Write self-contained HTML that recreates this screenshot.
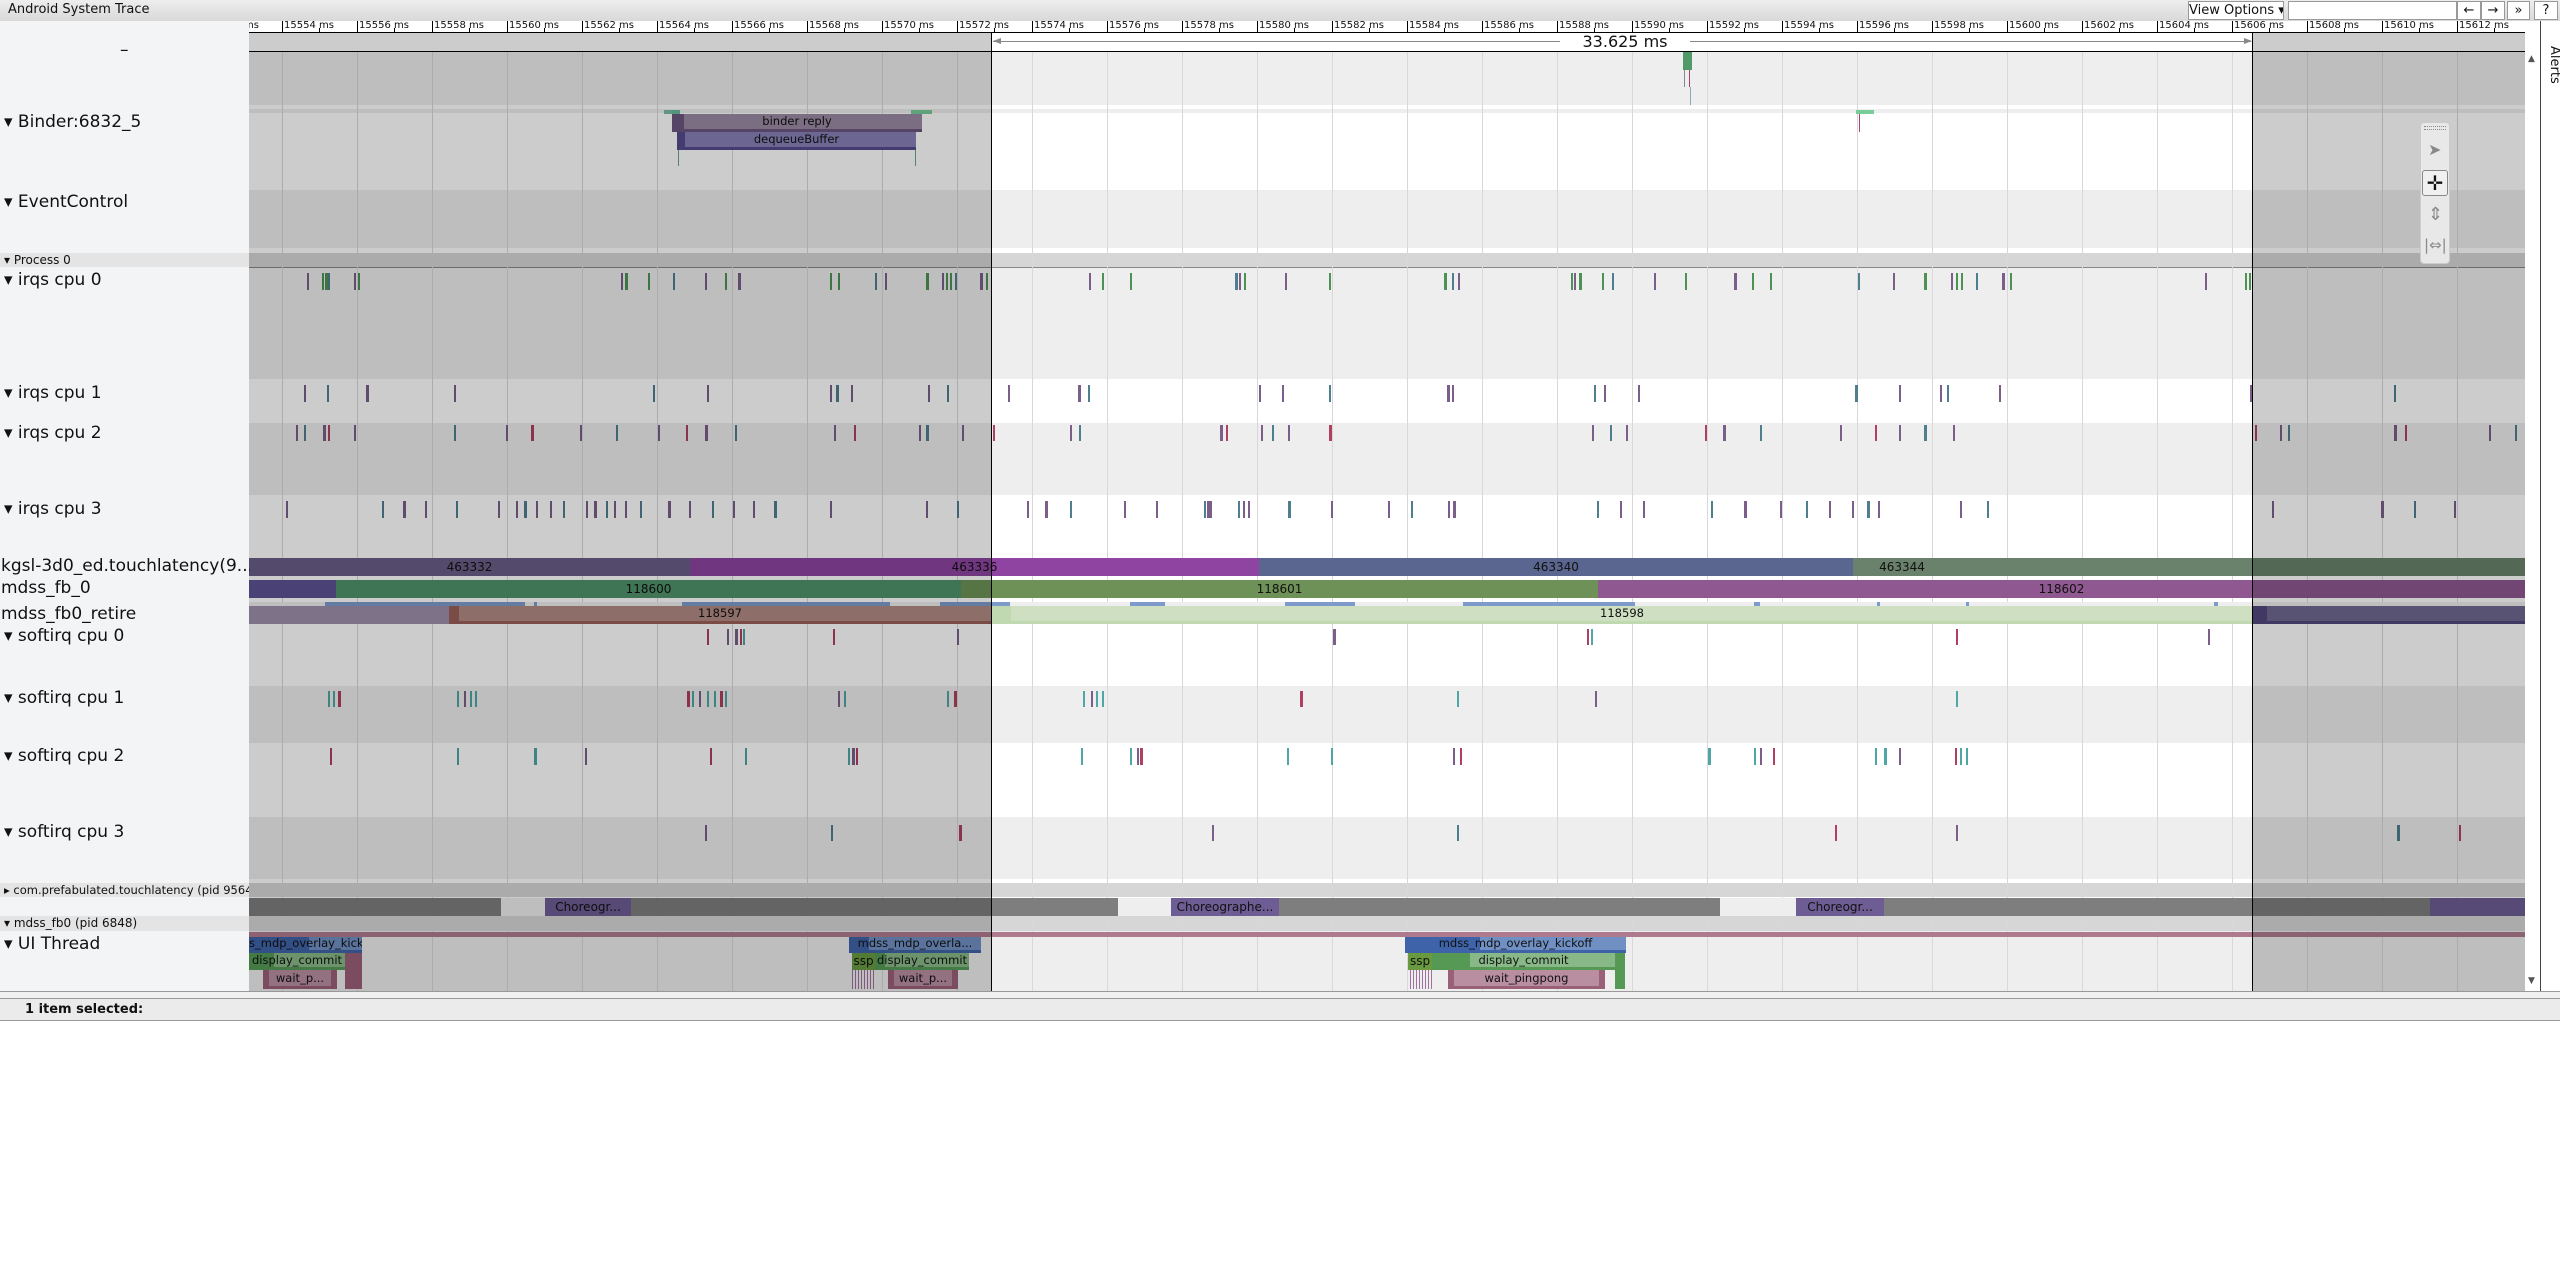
<!DOCTYPE html>
<html><head><meta charset="utf-8">
<style>
*{margin:0;padding:0;box-sizing:border-box}
body{width:2560px;height:1274px;position:relative;overflow:hidden;background:#fff;font-family:"DejaVu Sans","Liberation Sans",sans-serif;color:#111}
.a{position:absolute}
.lbl{position:absolute;left:0;width:249px;font-size:17px;white-space:nowrap;overflow:hidden}
.hdr{position:absolute;left:0;width:249px;font-size:12px;background:#e4e4e4;padding-left:4px;white-space:nowrap;overflow:hidden}
.btn{position:absolute;top:1px;height:19px;border:1px solid #999;background:#fff;font-size:13px;text-align:center;line-height:17px;white-space:nowrap;overflow:hidden}
</style></head><body>
<div class="a" style="left:0;top:0;width:2560px;height:21px;background:linear-gradient(#eee,#d9d9d9)"></div>
<div class="a" style="left:8px;top:2px;font-size:13px">Android System Trace</div>
<div class="btn" style="left:2188px;width:96px;font-size:13px">View Options ▾</div>
<div class="btn" style="left:2288px;width:169px"></div>
<div class="btn" style="left:2457px;width:24px">←</div>
<div class="btn" style="left:2481px;width:24px">→</div>
<div class="btn" style="left:2507px;width:23px">»</div>
<div class="btn" style="left:2534px;width:24px">?</div>
<div class="a" style="left:0;top:21px;width:249px;height:970px;background:#f3f4f6"></div>
<div id="tl" class="a" style="left:249px;top:21px;width:2276px;height:970px;background:#fff;overflow:hidden"></div>
<div class="a" style="left:2525px;top:33px;width:15px;height:958px;background:#fff"></div>
<div class="a" style="left:2528px;top:54px;font-size:9px;color:#555">▲</div>
<div class="a" style="left:2528px;top:976px;font-size:9px;color:#555">▼</div>
<div class="a" style="left:2540px;top:21px;width:20px;height:970px;background:#fff;border-left:1px solid #444"></div>
<div class="a" style="left:2562px;top:46px;transform:rotate(90deg);transform-origin:0 0;font-size:13px">Alerts</div>
<div class="lbl" style="top:40px;left:120px">–</div>
<div class="lbl" style="top:112px;left:4px">▾ Binder:6832_5</div>
<div class="lbl" style="top:192px;left:4px">▾ EventControl</div>
<div class="hdr" style="top:253px;height:14px;line-height:14px">▾ Process 0</div>
<div class="lbl" style="top:270px;left:4px">▾ irqs cpu 0</div>
<div class="lbl" style="top:383px;left:4px">▾ irqs cpu 1</div>
<div class="lbl" style="top:423px;left:4px">▾ irqs cpu 2</div>
<div class="lbl" style="top:499px;left:4px">▾ irqs cpu 3</div>
<div class="lbl" style="top:556px;left:1px">kgsl-3d0_ed.touchlatency(9...</div>
<div class="lbl" style="top:578px;left:1px">mdss_fb_0</div>
<div class="lbl" style="top:604px;left:1px">mdss_fb0_retire</div>
<div class="lbl" style="top:626px;left:4px">▾ softirq cpu 0</div>
<div class="lbl" style="top:688px;left:4px">▾ softirq cpu 1</div>
<div class="lbl" style="top:746px;left:4px">▾ softirq cpu 2</div>
<div class="lbl" style="top:822px;left:4px">▾ softirq cpu 3</div>
<div class="hdr" style="top:883px;height:14px;line-height:14px;font-size:11.5px">▸ com.prefabulated.touchlatency (pid 9564)</div>
<div class="hdr" style="top:916px;height:15px;line-height:15px">▾ mdss_fb0 (pid 6848)</div>
<div class="lbl" style="top:934px;left:4px">▾ UI Thread</div>
<div class="a" style="left:0;top:991px;width:2560px;height:1px;background:#999"></div>
<div class="a" style="left:0;top:992px;width:2560px;height:6px;background:#f0f0f0"></div>
<div class="a" style="left:0;top:998px;width:2560px;height:23px;background:#ebebeb;border-top:1px solid #999;border-bottom:1px solid #999"></div>
<div class="a" style="left:25px;top:1002px;font-size:13px;font-weight:bold">1 item selected:</div>
<div class="a" style="left:2420px;top:122px;width:30px;height:142px;background:#e8e8e8;border:1px solid #ccc;border-radius:4px"></div>
<div class="a" style="left:2424px;top:126px;width:22px;height:4px;border-top:1px dotted #888;border-bottom:1px dotted #888"></div>
<div class="a" style="left:2428px;top:140px;font-size:16px;color:#888">➤</div>
<div class="a" style="left:2422px;top:170px;width:26px;height:26px;border:1px solid #888;border-radius:3px;background:#f0f0f0;font-size:20px;line-height:24px;text-align:center;font-weight:bold">✛</div>
<div class="a" style="left:2428px;top:204px;font-size:18px;color:#888">⇕</div>
<div class="a" style="left:2424px;top:236px;font-size:15px;color:#888">|⇔|</div>
<script>
var tl=document.getElementById('tl');
function R(x,y,w,h,c,extra){var d=document.createElement('div');d.className='a';d.style.cssText='left:'+(x-249)+'px;top:'+(y-21)+'px;width:'+w+'px;height:'+h+'px;background:'+c+';'+(extra||'');tl.appendChild(d);return d;}
function S(x1,x2,y,h,c,t,ex){var d=R(x1,y,x2-x1,h,c,'font-size:12px;line-height:'+h+'px;text-align:center;white-space:nowrap;overflow:hidden;'+(ex||''));if(t)d.textContent=t;return d;}
function SP(x1,x2,y,h,dark,light,split,t){var p=((split)/(x2-x1)*100).toFixed(1);return S(x1,x2,y,h,'linear-gradient(to right,'+dark+' '+p+'%,'+light+' '+p+'%)',t,'border-bottom:3px solid '+dark+';line-height:'+(h-3)+'px;font-size:11.5px');}
R(249,33,2276,18,'#fff');
R(249,51,2276,1,'#000');
R(249,52,2276,53,'#eee');
R(249,109,2276,4,'#eee');
R(249,190,2276,58,'#eee');
R(249,253,2276,14,'#d6d6d6');
R(249,267,2276,1,'#888');
R(249,268,2276,111,'#eee');
R(249,423,2276,72,'#eee');
R(249,686,2276,57,'#eee');
R(249,817,2276,62,'#eee');
R(249,883,2276,14,'#d6d6d6');
R(249,897,2276,19,'#fff');
R(249,916,2276,15,'#d6d6d6');
R(249,931,2276,60,'#eee');
R(249,21,2291,12,'#fff');
R(249,32,2291,1,'#000');
for(var k=-1;k<31;k++){var x=282+k*75;R(x,21,1,12,'#000');R(x+37,28,1,5,'#000');
 var t=R(x+2,20,72,12,'transparent','font-size:10px;line-height:12px;white-space:nowrap');t.textContent=(15554+2*k)+' ms';
 if(x>249)R(x,52,1,939,'#d8d8d8');}
R(993,41,1258,1,'#888');
S(1560,1690,34,16,'#fff','33.625 ms','font-size:16px;line-height:16px');
R(993,38,8,7,'transparent','border-right:8px solid #888;border-top:3px solid transparent;border-bottom:3px solid transparent;width:0;height:0');
R(2244,38,0,0,'transparent','border-left:8px solid #888;border-top:3px solid transparent;border-bottom:3px solid transparent;width:0;height:0');
S(664,672,110,4,'#7ba');S(672,680,110,4,'#6b9');S(911,932,110,4,'#7c9');
SP(672,922,114,18,'#6c5680','#9a8aa4',12,'binder reply');
SP(677,916,132,18,'#554a8c','#8880b8',8,'dequeueBuffer');
R(678,150,1,16,'#6a8');R(915,150,1,16,'#6a8');
S(1683,1692,52,18,'#4f9a68');R(1684,70,1,17,'#889');R(1689,70,1,17,'#a46');R(1690,87,1,18,'#8ab');
S(1856,1874,110,4,'#7c9');R(1859,114,1,18,'#a47');
function M(list,y,h,cols){for(var i=0;i<list.length;i++){var x=Math.round(list[i]*1.633);R(x,y,(i%5==2?3:2),h,cols[i%cols.length]);}}
var P='#7b5f8a',G='#4d9155',T='#4f7f8f',RD='#b04060',TE='#4fa6a6';
M([188,197,199,201,217,219,380,383,397,412,432,444,452,508,513,536,542,567,577,579,582,585,600,604,667,675,692,756,759,762,787,814,884,889,893,962,964,967,981,987,1013,1032,1062,1073,1084,1138,1159,1178,1195,1198,1201,1210,1226,1231,1350,1375,1377],273,17,[P,G,G,T,P,G]);
M([186,200,224,278,400,433,508,512,521,568,580,617,660,666,771,785,814,886,889,976,982,1003,1136,1163,1188,1192,1224,1378,1466],385,17,[P,T,P]);
M([181,186,198,201,217,278,310,325,355,377,403,420,432,450,511,523,563,567,589,608,655,661,747,751,772,779,789,814,975,986,996,1044,1055,1078,1127,1148,1163,1178,1196,1381,1396,1401,1466,1473,1524,1540],425,16,[P,T,P,RD]);
M([175,234,247,260,279,305,316,321,328,337,345,359,364,371,376,383,392,409,422,436,449,461,474,508,567,586,629,640,655,688,708,737,739,741,758,761,764,789,815,850,864,887,890,978,992,1006,1048,1068,1090,1106,1120,1134,1143,1150,1200,1217,1391,1458,1478,1503],501,17,[P,T,P]);
M([433,445,450,453,455,510,586,816,972,974,1198,1352],629,16,[RD,P,P,RD,TE]);
M([201,204,207,280,284,288,291,421,424,428,433,437,441,444,513,517,580,584,663,668,671,675,796,892,977,1198],691,16,[TE,TE,RD,TE,P]);
M([202,280,327,358,435,456,519,522,524,662,692,696,698,788,815,890,894,1046,1074,1078,1086,1148,1154,1163,1197,1200,1204],748,17,[RD,TE,TE,P]);
M([432,509,587,742,892,1124,1198,1468,1506],825,16,[P,T,RD]);
S(249,690,558,18,'#6a5e88','463332');S(690,1259,558,18,'#8e44a0','463336');
S(1259,1853,558,18,'#5a6590','463340');S(1853,1951,558,18,'#6a826c','463344');S(1951,2525,558,18,'#6a826c');
S(249,336,580,18,'#5d5394');S(336,961,580,18,'#4f9369','118600');S(961,1598,580,18,'#6d9156','118601');S(1598,2525,580,18,'#8f5890','118602');
R(249,602,2276,4,'#eee');
[[325,525],[534,537],[682,890],[940,1010],[1130,1165],[1285,1355],[1463,1635],[1754,1760],[1877,1880],[1966,1969],[2214,2218]].forEach(function(s){R(s[0],602,s[1]-s[0],4,'#7e9acb')});
S(249,449,606,18,'#9d8fab');
SP(449,991,606,18,'#9a6058','#b28a84',10,'118597');
SP(991,2253,606,18,'#c0d9b0','#cfe0c2',20,'118598');
SP(2253,2525,606,18,'#52487c','#706890',14,'');
S(249,501,898,18,'#7e7e7e');S(501,545,898,18,'#eee');S(545,631,898,18,'#6d5d94','Choreogr...');S(631,1118,898,18,'#7e7e7e');
S(1118,1171,898,18,'#eee');S(1171,1279,898,18,'#6d5d94','Choreographe...');S(1279,1720,898,18,'#7e7e7e');
S(1720,1796,898,18,'#eee');S(1796,1884,898,18,'#6d5d94','Choreogr...');S(1884,2430,898,18,'#7e7e7e');S(2430,2525,898,18,'#6d5d94');
R(249,932,2276,5,'#b07a8e');
function UI(a){SP(a[0],a[1],937,16,'#3f63a8','#7090c4',a[3],a[2]);
 SP(a[4],a[5],953,17,'#559955','#88b888',a[7],a[6]);
 var p1=(6/(a[9]-a[8])*100).toFixed(1),p2=(100-6/(a[9]-a[8])*100).toFixed(1);
 S(a[8],a[9],970,19,'linear-gradient(to right,#9a6078 '+p1+'%,#b88ea0 '+p1+'%,#b88ea0 '+p2+'%,#9a6078 '+p2+'%)',a[10],'border-bottom:3px solid #9a6078;line-height:16px;font-size:11.5px');}
UI([249,362,'s_mdp_overlay_kickoff',60,249,345,'display_commit',25,263,337,'wait_p...']);
R(345,953,17,36,'#9a6078');
UI([849,981,'mdss_mdp_overla...',20,875,969,'display_commit',10,888,958,'wait_p...']);
S(852,875,953,17,'#6a9a40','ssp');
UI([1405,1626,'mdss_mdp_overlay_kickoff',75,1432,1615,'display_commit',38,1448,1605,'wait_pingpong']);
S(1408,1432,953,17,'#6a9a40','ssp');
R(1615,953,10,36,'#559955');
for(var i=0;i<8;i++){R(852+i*3,970,1,19,'#a070a0');R(1410+i*3,970,1,19,'#a070a0');}
R(249,33,742,958,'rgba(0,0,0,0.2)');R(2253,33,272,958,'rgba(0,0,0,0.2)');
R(991,33,1,958,'#000');R(2252,33,1,958,'#000');
</script>
</body></html>
